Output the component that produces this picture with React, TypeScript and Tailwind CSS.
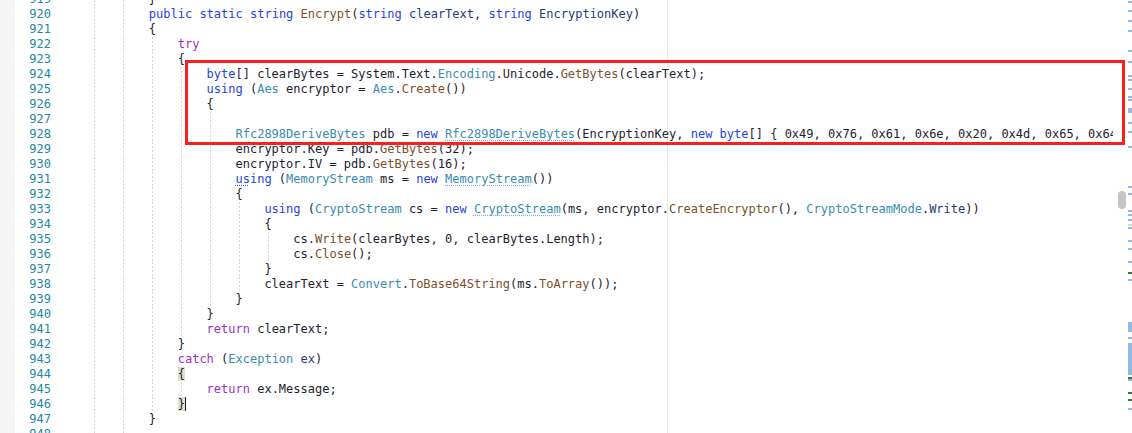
import React from 'react';

type Line = { n: number; indent: number; src: string };

// token colours, keyed by the short tag used in the line sources below
const tone: Record<string, string> = {
  k: "text-[#1f43e0]",
  c: "text-[#9b30c2]",
  y: "text-[#3a8bb0]",
  m: "text-[#7d4f2a]",
  p: "text-[#1d3b7a]",
  u: "text-[#3a8bb0] underline decoration-dotted decoration-[#7fb2e0] underline-offset-[2px]",
  ku: "text-[#1f43e0] underline decoration-dotted decoration-[#3c64d8] underline-offset-[2px]",
  b: "bg-[#dde0cf]",
  bc: "bg-[#dde0cf] border-r border-[#1e1e1e]",
};

const guideLeft = [
  "left-[3px]",
  "left-[32px]",
  "left-[61px]",
  "left-[90px]",
  "left-[119px]",
  "left-[148px]",
  "left-[177px]",
];

const lines: Line[] = [
  { n: 919, indent: 8, src: "}" },
  { n: 920, indent: 8, src: "⟨k:public⟩ ⟨k:static⟩ ⟨k:string⟩ ⟨m:Encrypt⟩(⟨k:string⟩ ⟨p:clearText⟩, ⟨k:string⟩ ⟨p:EncryptionKey⟩)" },
  { n: 921, indent: 8, src: "{" },
  { n: 922, indent: 12, src: "⟨c:try⟩" },
  { n: 923, indent: 12, src: "{" },
  { n: 924, indent: 16, src: "⟨k:byte⟩[] clearBytes = System.Text.⟨y:Encoding⟩.Unicode.⟨m:GetBytes⟩(clearText);" },
  { n: 925, indent: 16, src: "⟨k:using⟩ (⟨y:Aes⟩ encryptor = ⟨y:Aes⟩.⟨m:Create⟩())" },
  { n: 926, indent: 16, src: "{" },
  { n: 927, indent: 20, src: "" },
  { n: 928, indent: 20, src: "⟨y:Rfc2898DeriveBytes⟩ pdb = ⟨k:new⟩ ⟨u:Rfc2898DeriveBytes⟩(EncryptionKey, ⟨k:new⟩ ⟨k:byte⟩[] { 0x49, 0x76, 0x61, 0x6e, 0x20, 0x4d, 0x65, 0x64, 0x76, 0x65, 0x64, 0x65, 0x76 });" },
  { n: 929, indent: 20, src: "encryptor.Key = pdb.⟨m:GetBytes⟩(32);" },
  { n: 930, indent: 20, src: "encryptor.IV = pdb.⟨m:GetBytes⟩(16);" },
  { n: 931, indent: 20, src: "⟨ku:us⟩⟨k:ing⟩ (⟨y:MemoryStream⟩ ms = ⟨k:new⟩ ⟨u:MemoryStream⟩())" },
  { n: 932, indent: 20, src: "{" },
  { n: 933, indent: 24, src: "⟨k:using⟩ (⟨y:CryptoStream⟩ cs = ⟨k:new⟩ ⟨u:CryptoStream⟩(ms, encryptor.⟨m:CreateEncryptor⟩(), ⟨y:CryptoStreamMode⟩.⟨p:Write⟩))" },
  { n: 934, indent: 24, src: "{" },
  { n: 935, indent: 28, src: "cs.⟨m:Write⟩(clearBytes, 0, clearBytes.Length);" },
  { n: 936, indent: 28, src: "cs.⟨m:Close⟩();" },
  { n: 937, indent: 24, src: "}" },
  { n: 938, indent: 24, src: "clearText = ⟨y:Convert⟩.⟨m:ToBase64String⟩(ms.⟨m:ToArray⟩());" },
  { n: 939, indent: 20, src: "}" },
  { n: 940, indent: 16, src: "}" },
  { n: 941, indent: 16, src: "⟨c:return⟩ clearText;" },
  { n: 942, indent: 12, src: "}" },
  { n: 943, indent: 12, src: "⟨c:catch⟩ (⟨y:Exception⟩ ⟨p:ex⟩)" },
  { n: 944, indent: 12, src: "⟨b:{⟩" },
  { n: 945, indent: 16, src: "⟨c:return⟩ ex.Message;" },
  { n: 946, indent: 12, src: "⟨bc:}⟩" },
  { n: 947, indent: 8, src: "}" },
  { n: 948, indent: 8, src: "" },
];

// overview ruler marks: [top, height, colour]
const marks: [number, number, string][] = [
  [1, 2, "#8fb8e3"], [10, 2, "#8fb8e3"], [20, 2, "#8fb8e3"], [30, 2, "#8fb8e3"],
  [50, 2, "#8fb8e3"], [61, 2, "#8fb8e3"], [75, 2, "#8fb8e3"], [79, 2, "#8fb8e3"],
  [88, 2, "#8fb8e3"], [96, 2, "#8fb8e3"], [99, 2, "#8fb8e3"], [108, 5, "#8fb8e3"],
  [122, 2, "#8fb8e3"], [131, 2, "#8fb8e3"], [146, 2, "#8fb8e3"], [186, 2, "#8fb8e3"],
  [193, 2, "#8fb8e3"], [210, 2, "#8fb8e3"], [214, 2, "#8fb8e3"], [219, 2, "#8fb8e3"],
  [224, 2, "#d6dac0"], [227, 2, "#8fb8e3"], [240, 2, "#8fb8e3"], [248, 2, "#8fb8e3"],
  [261, 2, "#8fb8e3"], [272, 2, "#2e7d32"], [279, 2, "#8fb8e3"], [322, 10, "#8fb8e3"],
  [337, 2, "#8fb8e3"], [343, 32, "#8fb8e3"], [377, 2, "#2e7d32"], [379, 2, "#8fb8e3"],
  [392, 2, "#2e7d32"], [399, 2, "#2e7d32"], [408, 2, "#8fb8e3"],
];

const renderSrc = (src: string) => {
  const parts = src.split(/⟨(\w+):(.*?)⟩/);
  const out: React.ReactNode[] = [];
  for (let i = 0; i < parts.length; i += 3) {
    if (parts[i]) out.push(<span key={i}>{parts[i]}</span>);
    if (i + 2 < parts.length) {
      out.push(
        <span key={i + 1} className={tone[parts[i + 1]]}>
          {parts[i + 2]}
        </span>
      );
    }
  }
  return out;
};

const CodeRow = ({ line }: { line: Line }) => {
  const levels = Math.floor(line.indent / 4);
  return (
    <div className="flex h-[15px]">
      <div className="w-[36px] shrink-0 text-right text-[#2388a6]">{line.n}</div>
      <div className="relative ml-[40px] flex-1 whitespace-pre">
        {guideLeft.slice(0, levels).map((cls) => (
          <span
            key={cls}
            className={`absolute top-0 h-full w-px bg-[repeating-linear-gradient(to_bottom,#d6d6d6_0_2px,transparent_2px_4px)] ${cls}`}
          />
        ))}
        <span>{" ".repeat(line.indent)}</span>
        {renderSrc(line.src)}
      </div>
    </div>
  );
};

export default function App() {
  return (
    <div className="relative flex h-[433px] w-[1132px] overflow-hidden bg-white font-['DejaVu_Sans_Mono',monospace] text-[12px] leading-[15px] text-[#1e2230]">
      <div className="w-[15px] shrink-0 bg-[#f5f5f5]" />

      <div className="relative min-w-0 flex-1 overflow-hidden">
        <div className="absolute left-[652px] top-0 h-full w-px bg-[#ececec]" />
        <div className="relative -mt-2">
          {lines.map((line) => (
            <CodeRow key={line.n} line={line} />
          ))}
        </div>
      </div>

      <div className="w-[14px] shrink-0">
        <div className="ml-[5px] mt-[191px] h-[18px] w-[8px] rounded-full bg-[#c4c4c4]" />
      </div>

      <div className="relative w-[5px] shrink-0">
        {marks.map(([top, h, color], i) => (
          <div
            key={i}
            className="absolute right-0 w-[4px]"
            style={{ top, height: h, backgroundColor: color }}
          />
        ))}
      </div>

      <div className="absolute left-[185px] top-[60px] h-[85px] w-[940px] border-[3px] border-[#fa1e1e]" />
    </div>
  );
}
